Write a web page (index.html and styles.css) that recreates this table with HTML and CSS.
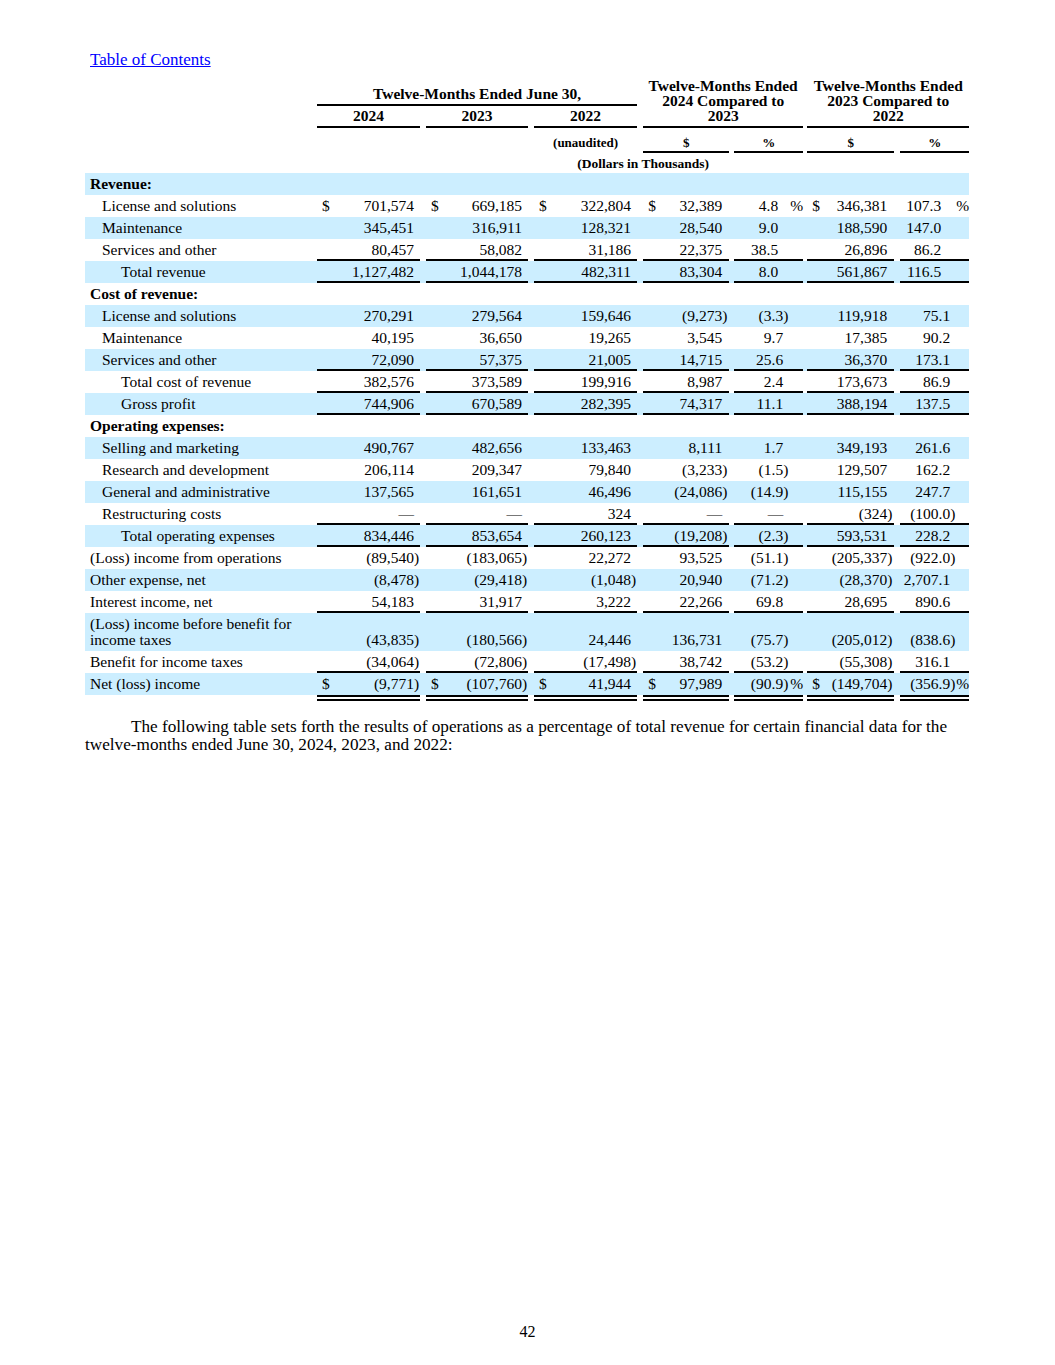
FILE: index.html
```html
<!DOCTYPE html>
<html>
<head>
<meta charset="utf-8">
<title>Results of Operations</title>
<link rel="stylesheet" href="styles.css">
</head>
<body>
<div class="page">
<div class="toc"><a href="#">Table of Contents</a></div>
<table class="fin">
<colgroup>
<col class="w-l">
<col class="w-c"><col class="w-n84"><col class="w-p6"><col class="w-g6">
<col class="w-c"><col class="w-n83"><col class="w-p6"><col class="w-g6">
<col class="w-c"><col class="w-n84"><col class="w-p6"><col class="w-g6">
<col class="w-c"><col class="w-n66"><col class="w-p7"><col class="w-g5">
<col class="w-n49"><col class="w-p6"><col class="w-q"><col class="w-g4">
<col class="w-c"><col class="w-n67"><col class="w-p7"><col class="w-g6">
<col class="w-n50"><col class="w-p5"><col class="w-q">
</colgroup>
<tr class="h1">
<td class="hx"></td>
<td class="hh ul" colspan="11">Twelve-Months Ended June 30,</td>
<td class="hx"></td>
<td class="hh ul hc" colspan="7" rowspan="2">Twelve-Months Ended<br>2024 Compared to<br>2023</td>
<td class="hx"></td>
<td class="hh ul hc" colspan="7" rowspan="2">Twelve-Months Ended<br>2023 Compared to<br>2022</td>
</tr>
<tr class="h2">
<td class="hx"></td>
<td class="hh hy ul" colspan="3">2024</td><td class="hx"></td>
<td class="hh hy ul" colspan="3">2023</td><td class="hx"></td>
<td class="hh hy ul" colspan="3">2022</td><td class="hx"></td>
<td class="hx"></td>
</tr>
<tr class="h3">
<td class="hx"></td>
<td class="hx" colspan="3"></td><td class="hx"></td>
<td class="hx" colspan="3"></td><td class="hx"></td>
<td class="hh hs" colspan="3">(unaudited)</td><td class="hx"></td>
<td class="hh hs ul" colspan="3">$</td><td class="hx"></td>
<td class="hh hs ul" colspan="3">%</td><td class="hx"></td>
<td class="hh hs ul" colspan="3">$</td><td class="hx"></td>
<td class="hh hs ul" colspan="3">%</td>
</tr>
<tr class="h4">
<td class="hx"></td>
<td class="hh hd" colspan="27">(Dollars in Thousands)</td>
</tr>

<tr class="b"><td class="l sec" colspan="28">Revenue:</td></tr>
<tr class="rv"><td class="l i1">License and solutions</td>
<td class="c">$</td><td class="n">701,574</td><td class="p"></td><td class="g"></td>
<td class="c">$</td><td class="n">669,185</td><td class="p"></td><td class="g"></td>
<td class="c">$</td><td class="n">322,804</td><td class="p"></td><td class="g"></td>
<td class="c">$</td><td class="n">32,389</td><td class="p"></td><td class="g"></td>
<td class="n a1">4.8</td><td class="p"></td><td class="q">%</td><td class="g"></td>
<td class="c">$</td><td class="n">346,381</td><td class="p"></td><td class="g"></td>
<td class="n a2">107.3</td><td class="p"></td><td class="q">%</td></tr>
<tr class="b rv"><td class="l i1">Maintenance</td>
<td class="c"></td><td class="n">345,451</td><td class="p"></td><td class="g"></td>
<td class="c"></td><td class="n">316,911</td><td class="p"></td><td class="g"></td>
<td class="c"></td><td class="n">128,321</td><td class="p"></td><td class="g"></td>
<td class="c"></td><td class="n">28,540</td><td class="p"></td><td class="g"></td>
<td class="n a1">9.0</td><td class="p"></td><td class="q"></td><td class="g"></td>
<td class="c"></td><td class="n">188,590</td><td class="p"></td><td class="g"></td>
<td class="n a2">147.0</td><td class="p"></td><td class="q"></td></tr>
<tr class="rv u"><td class="l i1">Services and other</td>
<td class="c"></td><td class="n">80,457</td><td class="p"></td><td class="g"></td>
<td class="c"></td><td class="n">58,082</td><td class="p"></td><td class="g"></td>
<td class="c"></td><td class="n">31,186</td><td class="p"></td><td class="g"></td>
<td class="c"></td><td class="n">22,375</td><td class="p"></td><td class="g"></td>
<td class="n a1">38.5</td><td class="p"></td><td class="q"></td><td class="g"></td>
<td class="c"></td><td class="n">26,896</td><td class="p"></td><td class="g"></td>
<td class="n a2">86.2</td><td class="p"></td><td class="q"></td></tr>
<tr class="b rv u"><td class="l i2">Total revenue</td>
<td class="c"></td><td class="n">1,127,482</td><td class="p"></td><td class="g"></td>
<td class="c"></td><td class="n">1,044,178</td><td class="p"></td><td class="g"></td>
<td class="c"></td><td class="n">482,311</td><td class="p"></td><td class="g"></td>
<td class="c"></td><td class="n">83,304</td><td class="p"></td><td class="g"></td>
<td class="n a1">8.0</td><td class="p"></td><td class="q"></td><td class="g"></td>
<td class="c"></td><td class="n">561,867</td><td class="p"></td><td class="g"></td>
<td class="n a2">116.5</td><td class="p"></td><td class="q"></td></tr>

<tr><td class="l sec" colspan="28">Cost of revenue:</td></tr>
<tr class="b"><td class="l i1">License and solutions</td>
<td class="c"></td><td class="n">270,291</td><td class="p"></td><td class="g"></td>
<td class="c"></td><td class="n">279,564</td><td class="p"></td><td class="g"></td>
<td class="c"></td><td class="n">159,646</td><td class="p"></td><td class="g"></td>
<td class="c"></td><td class="n">(9,273</td><td class="p">)</td><td class="g"></td>
<td class="n">(3.3</td><td class="p">)</td><td class="q"></td><td class="g"></td>
<td class="c"></td><td class="n">119,918</td><td class="p"></td><td class="g"></td>
<td class="n">75.1</td><td class="p"></td><td class="q"></td></tr>
<tr><td class="l i1">Maintenance</td>
<td class="c"></td><td class="n">40,195</td><td class="p"></td><td class="g"></td>
<td class="c"></td><td class="n">36,650</td><td class="p"></td><td class="g"></td>
<td class="c"></td><td class="n">19,265</td><td class="p"></td><td class="g"></td>
<td class="c"></td><td class="n">3,545</td><td class="p"></td><td class="g"></td>
<td class="n">9.7</td><td class="p"></td><td class="q"></td><td class="g"></td>
<td class="c"></td><td class="n">17,385</td><td class="p"></td><td class="g"></td>
<td class="n">90.2</td><td class="p"></td><td class="q"></td></tr>
<tr class="b u"><td class="l i1">Services and other</td>
<td class="c"></td><td class="n">72,090</td><td class="p"></td><td class="g"></td>
<td class="c"></td><td class="n">57,375</td><td class="p"></td><td class="g"></td>
<td class="c"></td><td class="n">21,005</td><td class="p"></td><td class="g"></td>
<td class="c"></td><td class="n">14,715</td><td class="p"></td><td class="g"></td>
<td class="n">25.6</td><td class="p"></td><td class="q"></td><td class="g"></td>
<td class="c"></td><td class="n">36,370</td><td class="p"></td><td class="g"></td>
<td class="n">173.1</td><td class="p"></td><td class="q"></td></tr>
<tr class="u"><td class="l i2">Total cost of revenue</td>
<td class="c"></td><td class="n">382,576</td><td class="p"></td><td class="g"></td>
<td class="c"></td><td class="n">373,589</td><td class="p"></td><td class="g"></td>
<td class="c"></td><td class="n">199,916</td><td class="p"></td><td class="g"></td>
<td class="c"></td><td class="n">8,987</td><td class="p"></td><td class="g"></td>
<td class="n">2.4</td><td class="p"></td><td class="q"></td><td class="g"></td>
<td class="c"></td><td class="n">173,673</td><td class="p"></td><td class="g"></td>
<td class="n">86.9</td><td class="p"></td><td class="q"></td></tr>
<tr class="b u"><td class="l i2">Gross profit</td>
<td class="c"></td><td class="n">744,906</td><td class="p"></td><td class="g"></td>
<td class="c"></td><td class="n">670,589</td><td class="p"></td><td class="g"></td>
<td class="c"></td><td class="n">282,395</td><td class="p"></td><td class="g"></td>
<td class="c"></td><td class="n">74,317</td><td class="p"></td><td class="g"></td>
<td class="n">11.1</td><td class="p"></td><td class="q"></td><td class="g"></td>
<td class="c"></td><td class="n">388,194</td><td class="p"></td><td class="g"></td>
<td class="n">137.5</td><td class="p"></td><td class="q"></td></tr>

<tr><td class="l sec" colspan="28">Operating expenses:</td></tr>
<tr class="b"><td class="l i1">Selling and marketing</td>
<td class="c"></td><td class="n">490,767</td><td class="p"></td><td class="g"></td>
<td class="c"></td><td class="n">482,656</td><td class="p"></td><td class="g"></td>
<td class="c"></td><td class="n">133,463</td><td class="p"></td><td class="g"></td>
<td class="c"></td><td class="n">8,111</td><td class="p"></td><td class="g"></td>
<td class="n">1.7</td><td class="p"></td><td class="q"></td><td class="g"></td>
<td class="c"></td><td class="n">349,193</td><td class="p"></td><td class="g"></td>
<td class="n">261.6</td><td class="p"></td><td class="q"></td></tr>
<tr><td class="l i1">Research and development</td>
<td class="c"></td><td class="n">206,114</td><td class="p"></td><td class="g"></td>
<td class="c"></td><td class="n">209,347</td><td class="p"></td><td class="g"></td>
<td class="c"></td><td class="n">79,840</td><td class="p"></td><td class="g"></td>
<td class="c"></td><td class="n">(3,233</td><td class="p">)</td><td class="g"></td>
<td class="n">(1.5</td><td class="p">)</td><td class="q"></td><td class="g"></td>
<td class="c"></td><td class="n">129,507</td><td class="p"></td><td class="g"></td>
<td class="n">162.2</td><td class="p"></td><td class="q"></td></tr>
<tr class="b"><td class="l i1">General and administrative</td>
<td class="c"></td><td class="n">137,565</td><td class="p"></td><td class="g"></td>
<td class="c"></td><td class="n">161,651</td><td class="p"></td><td class="g"></td>
<td class="c"></td><td class="n">46,496</td><td class="p"></td><td class="g"></td>
<td class="c"></td><td class="n">(24,086</td><td class="p">)</td><td class="g"></td>
<td class="n">(14.9</td><td class="p">)</td><td class="q"></td><td class="g"></td>
<td class="c"></td><td class="n">115,155</td><td class="p"></td><td class="g"></td>
<td class="n">247.7</td><td class="p"></td><td class="q"></td></tr>
<tr class="u"><td class="l i1">Restructuring costs</td>
<td class="c"></td><td class="n">—</td><td class="p"></td><td class="g"></td>
<td class="c"></td><td class="n">—</td><td class="p"></td><td class="g"></td>
<td class="c"></td><td class="n">324</td><td class="p"></td><td class="g"></td>
<td class="c"></td><td class="n">—</td><td class="p"></td><td class="g"></td>
<td class="n">—</td><td class="p"></td><td class="q"></td><td class="g"></td>
<td class="c"></td><td class="n">(324</td><td class="p">)</td><td class="g"></td>
<td class="n">(100.0</td><td class="p">)</td><td class="q"></td></tr>
<tr class="b u"><td class="l i2">Total operating expenses</td>
<td class="c"></td><td class="n">834,446</td><td class="p"></td><td class="g"></td>
<td class="c"></td><td class="n">853,654</td><td class="p"></td><td class="g"></td>
<td class="c"></td><td class="n">260,123</td><td class="p"></td><td class="g"></td>
<td class="c"></td><td class="n">(19,208</td><td class="p">)</td><td class="g"></td>
<td class="n">(2.3</td><td class="p">)</td><td class="q"></td><td class="g"></td>
<td class="c"></td><td class="n">593,531</td><td class="p"></td><td class="g"></td>
<td class="n">228.2</td><td class="p"></td><td class="q"></td></tr>
<tr><td class="l">(Loss) income from operations</td>
<td class="c"></td><td class="n">(89,540</td><td class="p">)</td><td class="g"></td>
<td class="c"></td><td class="n">(183,065</td><td class="p">)</td><td class="g"></td>
<td class="c"></td><td class="n">22,272</td><td class="p"></td><td class="g"></td>
<td class="c"></td><td class="n">93,525</td><td class="p"></td><td class="g"></td>
<td class="n">(51.1</td><td class="p">)</td><td class="q"></td><td class="g"></td>
<td class="c"></td><td class="n">(205,337</td><td class="p">)</td><td class="g"></td>
<td class="n">(922.0</td><td class="p">)</td><td class="q"></td></tr>
<tr class="b"><td class="l">Other expense, net</td>
<td class="c"></td><td class="n">(8,478</td><td class="p">)</td><td class="g"></td>
<td class="c"></td><td class="n">(29,418</td><td class="p">)</td><td class="g"></td>
<td class="c"></td><td class="n">(1,048</td><td class="p">)</td><td class="g"></td>
<td class="c"></td><td class="n">20,940</td><td class="p"></td><td class="g"></td>
<td class="n">(71.2</td><td class="p">)</td><td class="q"></td><td class="g"></td>
<td class="c"></td><td class="n">(28,370</td><td class="p">)</td><td class="g"></td>
<td class="n">2,707.1</td><td class="p"></td><td class="q"></td></tr>
<tr class="u"><td class="l">Interest income, net</td>
<td class="c"></td><td class="n">54,183</td><td class="p"></td><td class="g"></td>
<td class="c"></td><td class="n">31,917</td><td class="p"></td><td class="g"></td>
<td class="c"></td><td class="n">3,222</td><td class="p"></td><td class="g"></td>
<td class="c"></td><td class="n">22,266</td><td class="p"></td><td class="g"></td>
<td class="n">69.8</td><td class="p"></td><td class="q"></td><td class="g"></td>
<td class="c"></td><td class="n">28,695</td><td class="p"></td><td class="g"></td>
<td class="n">890.6</td><td class="p"></td><td class="q"></td></tr>
<tr class="b"><td class="l two">(Loss) income before benefit for income taxes</td>
<td class="c"></td><td class="n">(43,835</td><td class="p">)</td><td class="g"></td>
<td class="c"></td><td class="n">(180,566</td><td class="p">)</td><td class="g"></td>
<td class="c"></td><td class="n">24,446</td><td class="p"></td><td class="g"></td>
<td class="c"></td><td class="n">136,731</td><td class="p"></td><td class="g"></td>
<td class="n">(75.7</td><td class="p">)</td><td class="q"></td><td class="g"></td>
<td class="c"></td><td class="n">(205,012</td><td class="p">)</td><td class="g"></td>
<td class="n">(838.6</td><td class="p">)</td><td class="q"></td></tr>
<tr class="u"><td class="l">Benefit for income taxes</td>
<td class="c"></td><td class="n">(34,064</td><td class="p">)</td><td class="g"></td>
<td class="c"></td><td class="n">(72,806</td><td class="p">)</td><td class="g"></td>
<td class="c"></td><td class="n">(17,498</td><td class="p">)</td><td class="g"></td>
<td class="c"></td><td class="n">38,742</td><td class="p"></td><td class="g"></td>
<td class="n">(53.2</td><td class="p">)</td><td class="q"></td><td class="g"></td>
<td class="c"></td><td class="n">(55,308</td><td class="p">)</td><td class="g"></td>
<td class="n">316.1</td><td class="p"></td><td class="q"></td></tr>
<tr class="net"><td class="l">Net (loss) income</td>
<td class="c">$</td><td class="n">(9,771</td><td class="p">)</td><td class="g"></td>
<td class="c">$</td><td class="n">(107,760</td><td class="p">)</td><td class="g"></td>
<td class="c">$</td><td class="n">41,944</td><td class="p"></td><td class="g"></td>
<td class="c">$</td><td class="n">97,989</td><td class="p"></td><td class="g"></td>
<td class="n">(90.9</td><td class="p">)</td><td class="q">%</td><td class="g"></td>
<td class="c">$</td><td class="n">(149,704</td><td class="p">)</td><td class="g"></td>
<td class="n">(356.9</td><td class="p">)</td><td class="q">%</td></tr>
</table>

<p class="para">The following table sets forth the results of operations as a percentage of total revenue for certain financial data for the twelve-months ended June 30, 2024, 2023, and 2022:</p>

<div class="pn">42</div>
</div>
</body>
</html>
```

FILE: styles.css
```css
html, body {
  margin: 0;
  padding: 0;
  background: #ffffff;
}

body {
  font-family: "Liberation Serif", "Times New Roman", serif;
  color: #000000;
}

.page {
  width: 1055px;
  min-height: 1365px;
  box-sizing: border-box;
  padding: 50px 0 24px 0;
  display: flex;
  flex-direction: column;
}

.toc {
  margin-left: 90px;
  font-size: 17px;
  line-height: 19px;
}

.toc a {
  color: #0000ff;
  text-decoration: underline;
}

/* table */
.fin {
  margin: 9px 0 0 85px;
  width: 884px;
  table-layout: fixed;
  border-collapse: separate;
  border-spacing: 0;
  font-size: 15.5px;
}

.w-l { width: 232px; }
.w-c { width: 13px; }
.w-n84 { width: 84px; }
.w-n83 { width: 83px; }
.w-n66 { width: 66px; }
.w-n67 { width: 67px; }
.w-n49 { width: 49px; }
.w-n50 { width: 50px; }
.w-p5 { width: 5px; }
.w-p6 { width: 6px; }
.w-p7 { width: 7px; }
.w-q { width: 14px; }
.w-g4 { width: 4px; }
.w-g5 { width: 5px; }
.w-g6 { width: 6px; }

.fin td {
  padding: 3px 0 1px 0;
  line-height: 16px;
  border-bottom: 2px solid transparent;
  vertical-align: bottom;
  white-space: nowrap;
  overflow: visible;
}

/* header */
.fin tr.h1 { height: 28px; }
.fin tr.h2 { height: 22px; }

.fin td.hx {
  padding: 0;
  border-bottom: 0;
}

.fin td.hh {
  font-weight: bold;
  text-align: center;
  line-height: 15px;
  font-size: 15.5px;
  padding: 0 0 3px 0;
  border-bottom: 2px solid transparent;
  white-space: nowrap;
}

.fin td.hh.ul { border-bottom-color: #000000; }

.fin td.hy { padding-top: 2px; }

.fin td.hs {
  font-size: 13px;
  padding: 7px 0 1px 0;
}

.fin td.hd {
  font-size: 13.5px;
  padding: 3px 0 2px 0;
  border-bottom: 0;
}

/* body rows */
.fin tr.b { background: #cceeff; }

.fin td.l {
  white-space: normal;
  padding-left: 5px;
  padding-right: 18px;
}

.fin td.sec { font-weight: bold; }
.fin td.i1 { padding-left: 17px; }
.fin td.i2 { padding-left: 36px; }

.fin td.c {
  text-align: left;
  padding-left: 5px;
}

.fin td.n { text-align: right; }
.fin td.p { text-align: left; }
.fin td.q { text-align: right; }

.fin tr.rv td.a1 { padding-right: 5px; }
.fin tr.rv td.a2 { padding-right: 9px; }

.fin tr.u td:not(.l):not(.g) {
  border-bottom-color: #000000;
}

.fin tr.net td {
  padding-bottom: 3px;
  border-bottom: 6px double transparent;
  background: #cceeff;
  background-clip: padding-box;
}

.fin tr.net td:not(.l):not(.g) {
  border-bottom-color: #000000;
}

/* paragraph */
.para {
  margin: 17px 0 0 85px;
  width: 884px;
  font-size: 17.2px;
  line-height: 18px;
  text-indent: 46px;
}

.pn {
  margin-top: auto;
  text-align: center;
  font-size: 16px;
  line-height: 18px;
}
```
